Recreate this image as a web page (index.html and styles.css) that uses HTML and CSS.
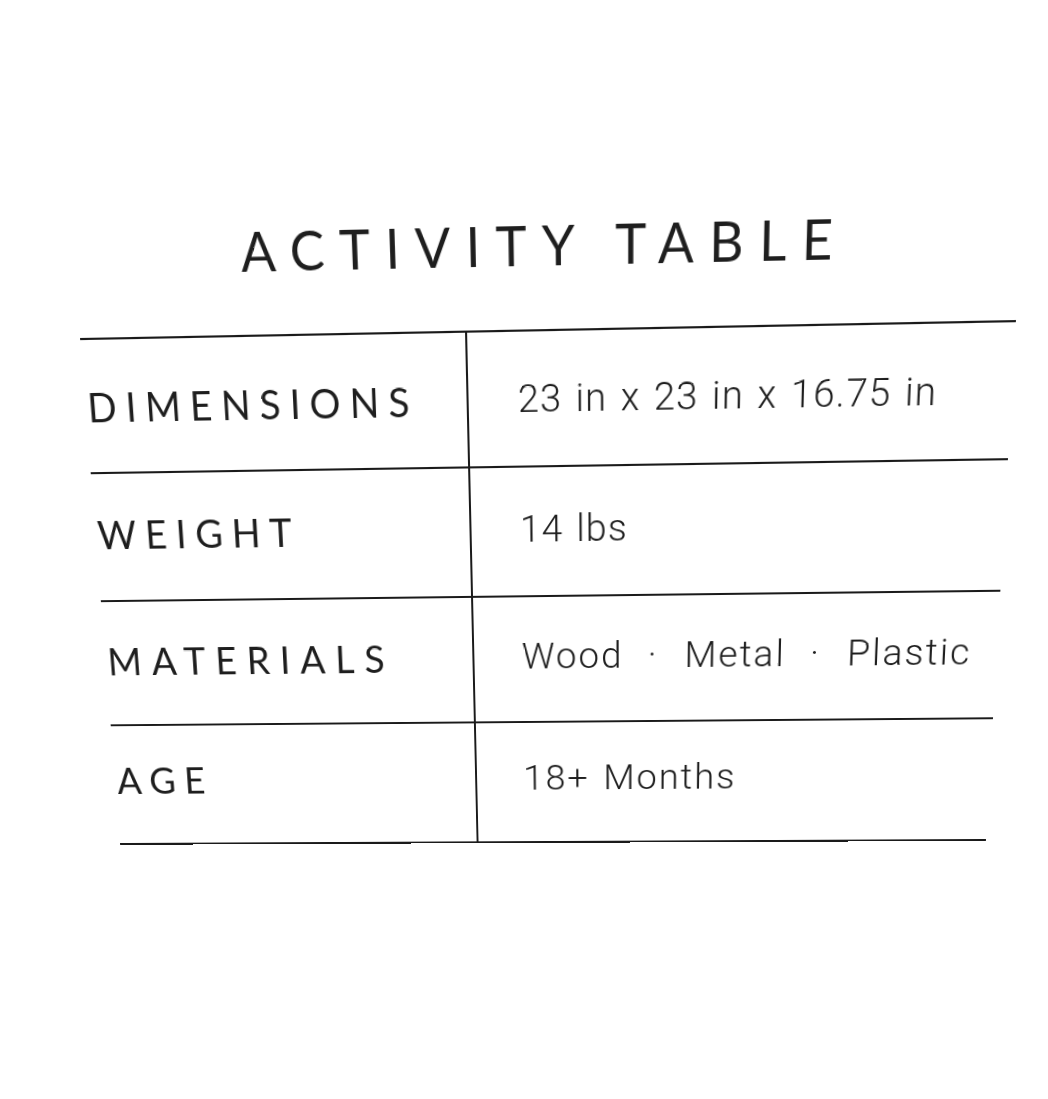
FILE: index.html
```html
<!DOCTYPE html>
<html lang="en">
<head>
<meta charset="utf-8">
<title>Activity Table</title>
<link rel="stylesheet" href="styles.css">
</head>
<body>
<div class="sheet">
  <h1 class="title">ACTIVITY TABLE</h1>
  <div class="spec">
    <div class="row row-first">
      <div class="label">DIMENSIONS</div>
      <div class="value">23 in x 23 in x 16.75 in</div>
    </div>
    <div class="row">
      <div class="label">WEIGHT</div>
      <div class="value">14 lbs</div>
    </div>
    <div class="row">
      <div class="label label-wide">MATERIALS</div>
      <div class="value value-wide"><span>Wood</span><span class="dot">·</span><span>Metal</span><span class="dot">·</span><span>Plastic</span></div>
    </div>
    <div class="row row-last">
      <div class="label">AGE</div>
      <div class="value value-wide">18+ Months</div>
    </div>
  </div>
</div>
</body>
</html>
```
FILE: styles.css
```css
html, body {
  margin: 0;
  padding: 0;
  background: #ffffff;
  overflow: hidden;
}

.sheet {
  width: 1000px;
  height: 1000px;
  box-sizing: border-box;
  padding-top: 223px;
  transform-origin: 0 0;
  transform: matrix3d(1.062707, -0.030897, 0, -0.000030809,
                      0.102285, 1.180579, 0, 0.00016484,
                      0, 0, 1, 0,
                      -34.616, -31.566, 0, 1);
  color: #1e1e1e;
}

.title {
  margin: 0 0 0 74px;
  width: 900px;
  box-sizing: border-box;
  padding-left: 14px;
  font-family: Lato, "Noto Sans", sans-serif;
  font-weight: 400;
  font-size: 50px;
  line-height: 60px;
  letter-spacing: 14.5px;
  text-align: center;
}

.spec {
  margin: 47px 0 0 80px;
  width: 900px;
  border-top: 2px solid #1a1a1a;
}

.row {
  display: grid;
  grid-template-columns: 376px 1fr;
  height: 127.5px;
  box-sizing: border-box;
  border-bottom: 2px solid #1a1a1a;
}

.label {
  display: flex;
  align-items: center;
  padding-left: 2px;
  padding-bottom: 6px;
  font-family: Lato, "Noto Sans", sans-serif;
  font-weight: 400;
  font-size: 38px;
  letter-spacing: 9px;
}

.label-wide {
  letter-spacing: 10.2px;
}

.value {
  display: flex;
  align-items: center;
  border-left: 2px solid #1a1a1a;
  padding-left: 48px;
  padding-bottom: 6px;
  font-family: Roboto, "Liberation Sans", sans-serif;
  font-weight: 300;
  font-size: 37px;
  letter-spacing: 1px;
  word-spacing: 3px;
  white-space: pre;
}

.row-first .label,
.row-first .value {
  padding-bottom: 0;
}

.row-last .label,
.row-last .value {
  padding-bottom: 10px;
}

.value-wide {
  letter-spacing: 2px;
}

.dot {
  margin: 0 26px 0 24px;
}
```
